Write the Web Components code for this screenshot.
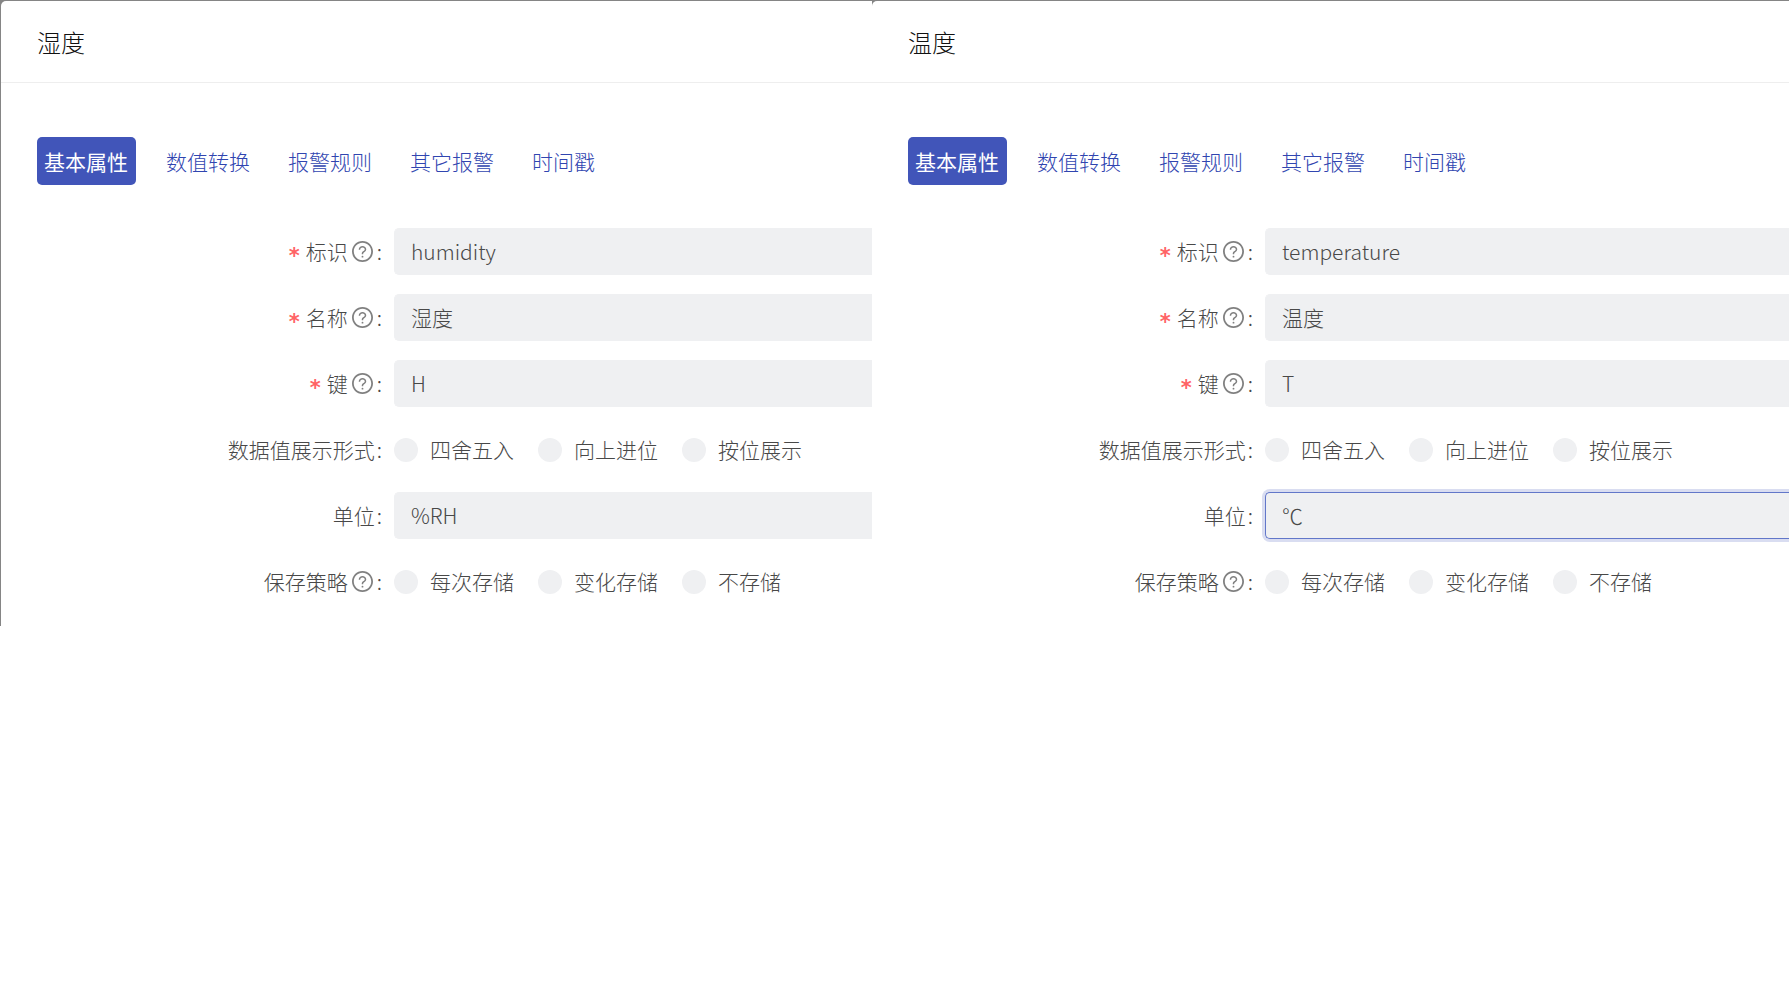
<!DOCTYPE html>
<html lang="zh-CN">
<head>
<meta charset="utf-8">
<title>属性</title>
<style>
  html, body { margin: 0; background: #fff; }
  body {
    font-family: "Noto Sans CJK SC", sans-serif;
    font-size: 21px;
    font-weight: 300;
    line-height: 32px;
    color: #484848;
    overflow-x: hidden;
  }
  .board { display: grid; grid-template-columns: minmax(0, 872fr) minmax(0, 917fr); background: #858585; }
  .board property-dialog:first-child { margin-left: 1px; }
</style>
</head>
<body>
<main class="board">
  <property-dialog>
    <span slot="title">湿度</span>
    <tab-strip slot="tabs" items="基本属性,数值转换,报警规则,其它报警,时间戳"></tab-strip>
    <text-field label="标识" value="humidity" required help></text-field>
    <text-field label="名称" value="湿度" required help></text-field>
    <text-field label="键" value="H" required help></text-field>
    <radio-field label="数据值展示形式" options="四舍五入,向上进位,按位展示"></radio-field>
    <text-field label="单位" value="%RH"></text-field>
    <radio-field label="保存策略" help options="每次存储,变化存储,不存储"></radio-field>
  </property-dialog>
  <property-dialog>
    <span slot="title">温度</span>
    <tab-strip slot="tabs" items="基本属性,数值转换,报警规则,其它报警,时间戳"></tab-strip>
    <text-field label="标识" value="temperature" required help></text-field>
    <text-field label="名称" value="温度" required help></text-field>
    <text-field label="键" value="T" required help></text-field>
    <radio-field label="数据值展示形式" options="四舍五入,向上进位,按位展示"></radio-field>
    <text-field label="单位" value="℃" active></text-field>
    <radio-field label="保存策略" help options="每次存储,变化存储,不存储"></radio-field>
  </property-dialog>
</main>

<script>
class PropertyDialog extends HTMLElement {
  constructor() {
    super();
    this.attachShadow({ mode: "open" }).innerHTML = `
      <style>
        :host { display: block; margin-top: 1px; background: #fff; border-radius: 5px 0 0 0; overflow: hidden; }
        header { padding: 24px 36px; border-bottom: 1px solid #eee; }
        h2 { margin: 0; font-size: 24px; line-height: 33px; font-weight: inherit; color: #111; }
        nav { padding: 54px 36px 43px; }
        form { display: grid; gap: 19px; padding-bottom: 21px; }
      </style>
      <header><h2><slot name="title"></slot></h2></header>
      <nav><slot name="tabs"></slot></nav>
      <form><slot></slot></form>`;
  }
}

class TabStrip extends HTMLElement {
  connectedCallback() {
    const items = this.getAttribute("items").split(",");
    this.attachShadow({ mode: "open" }).innerHTML = `
      <style>
        :host { display: block; }
        div { display: flex; gap: 23px; }
        button {
          margin: 0; padding: 8px 8px 8px 7px; border: 0; border-radius: 5px; background: none;
          font: inherit; color: #3045b0; white-space: nowrap; cursor: pointer;
        }
        button[aria-selected="true"] { background: #4155b9; color: #fff; font-weight: 400; }
      </style>
      <div role="tablist">${items.map((t, i) =>
        `<button type="button" role="tab" aria-selected="${i === 0}">${t}</button>`).join("")}</div>`;
  }
}

class HelpIcon extends HTMLElement {
  constructor() {
    super();
    this.attachShadow({ mode: "open" }).innerHTML = `
      <style>
        :host { display: block; width: 21px; height: 21px; color: #808080; }
        svg { display: block; width: 100%; height: 100%; fill: currentColor; }
      </style>
      <svg viewBox="64 64 896 896" aria-hidden="true">
        <path d="M512 64C264.600 64 64 264.600 64 512s200.600 448 448 448 448-200.600 448-448S759.400 64 512 64zm0 820c-205.400 0-372-166.600-372-372s166.600-372 372-372 372 166.600 372 372-166.600 372-372 372z"/>
        <path d="M623.600 316.700C593.600 290.400 554 276 512 276s-81.600 14.500-111.600 40.700C369.200 344 352 380.700 352 420v7.600c0 4.400 3.600 8 8 8h48c4.400 0 8-3.600 8-8V420c0-44.100 43.100-80 96-80s96 35.900 96 80c0 31.100-22 59.600-56.100 72.700-21.200 8.100-39.200 22.300-52.100 40.900-13.100 19-19.900 41.800-19.900 64.900V620c0 4.400 3.600 8 8 8h48c4.400 0 8-3.600 8-8v-22.700a48.300 48.300 0 0 1 30.900-44.800c59-22.700 97.100-74.700 97.100-132.500.1-39.300-17.100-76-48.300-103.300zM472 732a40 40 0 1 0 80 0 40 40 0 1 0-80 0z"/>
      </svg>`;
  }
}

const rowStyle = `
  :host { display: block; }
  .row { display: grid; grid-template-columns: 381px minmax(0, 1fr); column-gap: 12px; align-items: center; min-height: 47px; }
  .caption { display: flex; justify-content: flex-end; align-items: center; }
  .name, .colon, .text { padding-bottom: 2px; }
  .star { color: #ff6466; margin-right: 6px; font-family: "DejaVu Sans", sans-serif; font-weight: 700; line-height: 24px; padding-top: 8px; }
  help-icon { margin: 0 4px; }
  .name + .colon { margin-left: 2px; }
`;
const caption = el =>
  (el.hasAttribute("required") ? `<span class="star">*</span>` : "") +
  `<span class="name">${el.getAttribute("label")}</span>` +
  (el.hasAttribute("help") ? `<help-icon></help-icon>` : "") + `<span class="colon">:</span>`;

class TextField extends HTMLElement {
  connectedCallback() {
    this.attachShadow({ mode: "open" }).innerHTML = `
      <style>${rowStyle}
        input {
          box-sizing: border-box; width: 100%; height: 47px; margin: 0; padding: 0 16px 2px;
          border: 1px solid #eff0f2; border-right: 0; border-radius: 5px 0 0 5px;
          background: #eff0f2; font: inherit; color: #484848; outline: 0;
        }
        :host([active]) input, input:focus { border-color: #6277c9; box-shadow: 0 0 0 3px #d9ddf1; }
      </style>
      <div class="row">
        <label class="caption" for="field">${caption(this)}</label>
        <input id="field" type="text" value="${this.getAttribute("value")}">
      </div>`;
  }
}

class RadioField extends HTMLElement {
  connectedCallback() {
    const options = this.getAttribute("options").split(",");
    this.attachShadow({ mode: "open" }).innerHTML = `
      <style>${rowStyle}
        .options { display: flex; gap: 24px; }
        .options label { display: flex; align-items: center; gap: 12px; white-space: nowrap; }
        input { appearance: none; width: 24px; height: 24px; margin: 0; border-radius: 50%; background: #eff0f2; }
        input:checked { border: 7px solid #4155b9; }
      </style>
      <div class="row" role="radiogroup" aria-labelledby="cap">
        <div class="caption" id="cap">${caption(this)}</div>
        <div class="options">${options.map(o =>
          `<label><input type="radio" name="choice" value="${o}"><span class="text">${o}</span></label>`).join("")}</div>
      </div>`;
  }
}

customElements.define("help-icon", HelpIcon);
customElements.define("tab-strip", TabStrip);
customElements.define("text-field", TextField);
customElements.define("radio-field", RadioField);
customElements.define("property-dialog", PropertyDialog);
</script>
</body>
</html>
